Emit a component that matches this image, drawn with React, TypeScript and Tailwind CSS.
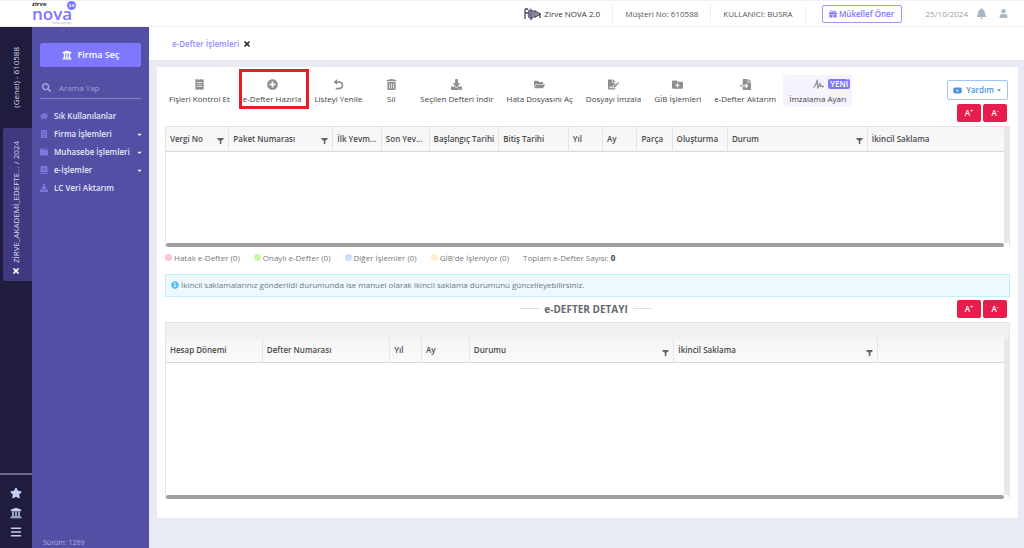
import React from 'react';
import {
  FaBell,
  FaBook,
  FaBuilding,
  FaCaretDown,
  FaDownload,
  FaFileImport,
  FaFileSignature,
  FaFolderOpen,
  FaFolderPlus,
  FaGift,
  FaHome,
  FaInfoCircle,
  FaPlusCircle,
  FaReceipt,
  FaSearch,
  FaStar,
  FaTrashAlt,
  FaUniversity,
  FaUser,
  FaWallet,
  FaYoutube,
} from 'react-icons/fa';
import { FaBars, FaXmark } from 'react-icons/fa6';

interface Column {
  label: string;
  width?: string;
  filter?: boolean;
}

const UndoIcon = ({ className }: { className?: string }) => (
  <svg viewBox="0 0 12 12" className={className}>
    <path d="M2.5 3.4h4.3a3.5 3.5 0 0 1 0 7.1H3" fill="none" stroke="currentColor" strokeWidth="1.7" />
    <path d="M4.6 0v6.6L.6 3.3z" fill="currentColor" />
  </svg>
);

const PulseIcon = ({ className }: { className?: string }) => (
  <svg viewBox="0 0 12 12" className={className}>
    <path
      d="M.5 9.5L2.8 6.5L4.6 1.2L5.2 10L7.4 4.6L8.4 8.2L9.4 7.2L10.2 8.4H12"
      fill="none"
      stroke="currentColor"
      strokeWidth="1.3"
      strokeLinejoin="round"
    />
  </svg>
);

const packageColumns: Column[] = [
  { label: 'Vergi No', width: 'w-[7.5%]', filter: true },
  { label: 'Paket Numarası', width: 'w-[12.4%]', filter: true },
  { label: 'İlk Yevm...', width: 'w-[5.8%]' },
  { label: 'Son Yev...', width: 'w-[5.7%]' },
  { label: 'Başlangıç Tarihi', width: 'w-[8.3%]' },
  { label: 'Bitiş Tarihi', width: 'w-[8.3%]' },
  { label: 'Yıl', width: 'w-[4.1%]' },
  { label: 'Ay', width: 'w-[4.1%]' },
  { label: 'Parça', width: 'w-[4.2%]' },
  { label: 'Oluşturma', width: 'w-[6.6%]' },
  { label: 'Durum', width: 'w-[16.7%]', filter: true },
  { label: 'İkincil Saklama' },
];

const detailColumns: Column[] = [
  { label: 'Hesap Dönemi', width: 'w-[11.5%]' },
  { label: 'Defter Numarası', width: 'w-[15.2%]' },
  { label: 'Yıl', width: 'w-[3.8%]' },
  { label: 'Ay', width: 'w-[5.7%]' },
  { label: 'Durumu', width: 'w-[24.4%]', filter: true },
  { label: 'İkincil Saklama', width: 'w-[24.3%]', filter: true },
  { label: '' },
];

const tools = [
  { label: 'Fişleri Kontrol Et', Icon: FaReceipt },
  { label: 'e-Defter Hazırla', Icon: FaPlusCircle, marked: true },
  { label: 'Listeyi Yenile', Icon: UndoIcon },
  { label: 'Sil', Icon: FaTrashAlt },
  { label: 'Seçilen Defteri İndir', Icon: FaDownload },
  { label: 'Hata Dosyasını Aç', Icon: FaFolderOpen },
  { label: 'Dosyayı İmzala', Icon: FaFileSignature },
  { label: 'GİB İşlemleri', Icon: FaFolderPlus },
  { label: 'e-Defter Aktarım', Icon: FaFileImport },
  { label: 'İmzalama Ayarı', Icon: PulseIcon, isNew: true },
];

const menu = [
  { label: 'Sık Kullanılanlar', Icon: FaHome },
  { label: 'Firma İşlemleri', Icon: FaBuilding, sub: true },
  { label: 'Muhasebe İşlemleri', Icon: FaWallet, sub: true },
  { label: 'e-İşlemler', Icon: FaBook, sub: true },
  { label: 'LC Veri Aktarım', Icon: FaDownload },
];

const legend = [
  { label: 'Hatalı e-Defter (0)', color: 'bg-[#ffc4d2]' },
  { label: 'Onaylı e-Defter (0)', color: 'bg-[#c3f7ae]' },
  { label: 'Diğer İşlemler (0)', color: 'bg-[#cde0fa]' },
  { label: "GİB'de İşleniyor (0)", color: 'bg-[#ffeecb]' },
];

const FilterIcon = () => (
  <svg viewBox="0 0 8 8" className="mt-1 h-[7px] w-[7px] shrink-0 fill-[#6a6262]">
    <path d="M.5 1h7v1.5L5 4.2V8H3.2V4.2L.5 2.5z" />
  </svg>
);

const FontButtons = () => (
  <div className="flex gap-0.5 text-[8px] font-semibold leading-none text-white">
    <button className="h-[18px] w-6 rounded-xs bg-[#e71d4b]" aria-label="Yazıyı büyüt">
      A<sup>+</sup>
    </button>
    <button className="h-[18px] w-6 rounded-xs bg-[#e71d4b]" aria-label="Yazıyı küçült">
      A<sup>-</sup>
    </button>
  </div>
);

const DataGrid: React.FC<{ columns: Column[]; bodyClass: string; band?: boolean }> = ({ columns, bodyClass, band }) => (
  <div className="border border-b-0 border-[#e4e4e4]">
    {band && <div className="h-4 bg-[#f1f1f1]" />}
    <div className="flex">
      <div className="min-w-0 flex-1">
        <table className="w-full table-fixed border-collapse text-left text-[8px] text-[#4a4a4a]">
          <thead>
            <tr className="h-6 border-b border-[#d9d9d9] bg-linear-to-b from-[#f5f5f5] to-[#fafafa]">
              {columns.map((col, i) => (
                <th
                  key={i}
                  className={`${col.width ?? ''} ${i < columns.length - 1 ? 'border-r border-[#e4e4e4]' : ''} p-0 font-semibold`}
                >
                  <div className="flex items-center justify-between pl-1 pr-1">
                    <span className="whitespace-nowrap">{col.label}</span>
                    {col.filter && <FilterIcon />}
                  </div>
                </th>
              ))}
            </tr>
          </thead>
        </table>
        <div className={bodyClass} />
        <div className="h-1 rounded-full bg-[#a0a0a0]" />
      </div>
      <div className="mb-1 w-[5px] bg-[#e8e8e8]" />
    </div>
  </div>
);

const TopBar = () => (
  <header className="flex h-[27px] items-center border-y border-[#f0f0f2] bg-white text-[8px] text-[#555]">
    <div className="relative ml-8 flex h-full w-12 flex-col">
      <span className="text-[6px] font-bold leading-[6px] text-[#222]">zirve</span>
      <span className="text-[17px] font-semibold leading-[13px] text-[#7e75fb]">nova</span>
      <span className="pl-5 text-[4px] leading-[6px] text-[#a9a3fd]">mikrogrup</span>
      <span className="absolute right-1 top-0 flex h-[9px] w-[9px] items-center justify-center rounded-full bg-[#7e75fb] text-[4px] font-bold leading-[4px] text-white">
        2.0
      </span>
    </div>
    <div className="ml-auto flex h-[18px] items-center">
      <div className="flex h-full items-center gap-0.5 border-r border-[#eeeeee] pr-3 text-[#333]">
        <svg viewBox="0 0 18 14" className="h-3.5 w-[18px]">
          <path d="M5 0l8 6-6 8-4-6z" fill="#d9cff5" />
          <path d="M1 2v10M1 2h3M1 6h4v5M5 3v8M7 3l3 2v4l-3 3zM11 4l5 3-5 3zM16 6v5" fill="none" stroke="#4b4358" strokeWidth="1.3" />
          <path d="M8 4l7 3-7 4z" fill="#8d8796" />
        </svg>
        Zirve NOVA 2.0
      </div>
      <div className="flex h-full items-center border-r border-[#eeeeee] px-3">Müşteri No: 610588</div>
      <div className="flex h-full items-center border-r border-[#eeeeee] px-3">KULLANICI: BUSRA</div>
      <button className="ml-4 flex h-[18px] w-20 items-center justify-center gap-0.5 rounded-xs border border-[#9d97fd] font-semibold text-[#7e75fb]">
        <FaGift className="h-2 w-2" />
        Mükellef Öner
      </button>
      <span className="ml-6 text-[#9b9b9b]">25/10/2024</span>
      <button className="ml-2" aria-label="Bildirimler">
        <FaBell className="h-[11px] w-[11px] text-[#a9b8c6]" />
      </button>
      <button className="ml-3 mr-4" aria-label="Hesap">
        <FaUser className="h-[9px] w-[9px] text-[#a9b8c6]" />
      </button>
    </div>
  </header>
);

const Rail = () => (
  <aside className="flex w-8 shrink-0 flex-col bg-[#1f1c3d] text-[8px] text-[#d8d8ea]">
    <div className="flex h-[101px] items-center justify-center">
      <span className="rotate-180 whitespace-nowrap [writing-mode:vertical-rl]">(Genel) - 610588</span>
    </div>
    <div className="ml-[3px] flex h-[153px] flex-col items-center justify-end gap-1 rounded-l-xs bg-[#3f3a80] pb-1.5 pr-1">
      <span className="rotate-180 whitespace-nowrap [writing-mode:vertical-rl]">ZİRVE_AKADEMİ_EDEFTE... / 2024</span>
      <button aria-label="Sekmeyi kapat">
        <FaXmark className="h-2 w-2 stroke-white stroke-[60] text-white" />
      </button>
    </div>
    <div className="mt-auto flex h-[75px] flex-col items-center justify-between border-t-2 border-[#6a6884] pb-2.5 pt-3 text-[#c3cdf7]">
      <FaStar className="h-3 w-3" />
      <FaUniversity className="h-3 w-3" />
      <FaBars className="h-3 w-3" />
    </div>
  </aside>
);

const Sidebar = () => (
  <nav className="flex w-[117px] shrink-0 flex-col bg-[#524fa5] text-[8px] text-[#e6e6f6]">
    <button className="mx-2 mt-4 flex h-6 items-center justify-center gap-1.5 rounded-xs bg-[#7f78ff] text-[9px] font-semibold text-white">
      <FaUniversity className="h-2.5 w-2.5" />
      Firma Seç
    </button>
    <label className="mx-2 mt-2.5 flex h-[22px] items-center gap-2 border-b border-[#8480c8] pl-0.5">
      <FaSearch className="h-[9px] w-[9px] shrink-0 text-[#a9a6dd]" />
      <input
        type="text"
        aria-label="Arama Yap"
        placeholder="Arama Yap"
        className="w-full bg-transparent text-[8px] outline-none placeholder:text-[#a19fd8]"
      />
    </label>
    <ul className="mt-2">
      {menu.map(({ label, Icon, sub }) => (
        <li key={label}>
          <a href="#" className="flex h-[18px] items-center gap-1.5 pl-2 pr-1.5 font-semibold">
            <Icon className="h-2 w-2 shrink-0 text-[#7f7adf]" />
            <span className="whitespace-nowrap">{label}</span>
            {sub && <FaCaretDown className="ml-auto h-[7px] w-[7px] text-white" />}
          </a>
        </li>
      ))}
    </ul>
    <span className="mb-px ml-[11px] mt-auto text-[7px] leading-[9px] text-[#b2b0e0]">Sürüm: 1269</span>
  </nav>
);

const Toolbar = () => (
  <div className="flex items-start">
    <div className="-ml-0.5 flex gap-px text-[8px] text-[#444]">
      {tools.map(({ label, Icon, marked, isNew }) => (
        <button
          key={label}
          className={`relative mt-2 flex h-8 min-w-11 flex-col items-center justify-center gap-[3px] rounded-xs px-1.5 leading-[11px] ${isNew ? 'bg-[#f6f3fc]' : ''}`}
        >
          <span className={`flex h-[11px] items-center gap-1 ${isNew ? '-mr-1 pl-6' : ''}`}>
            <Icon className="h-[11px] w-[11px] shrink-0 text-[#8f8f8f]" />
            {isNew && (
              <span className="rounded-xs bg-[#7f78ff] px-0.5 text-[8px] font-semibold leading-[10px] text-white">YENİ</span>
            )}
          </span>
          <span className="whitespace-nowrap">{label}</span>
          {marked && <span className="absolute -bottom-0.5 -right-0.5 -top-1.5 left-0.5 border-3 border-[#ed1c24]" />}
        </button>
      ))}
    </div>
    <div className="ml-auto mt-[13px] flex flex-col items-end gap-1">
      <button className="mr-0.5 flex h-5 w-[61px] items-center justify-center gap-1 rounded-xs border border-[#9cc6f5] text-[8px] font-semibold text-[#4b93e2]">
        <FaYoutube className="h-[9px] w-[9px]" />
        Yardım
        <FaCaretDown className="-ml-0.5 h-1.5 w-1.5" />
      </button>
      <div className="pr-[3px]">
        <FontButtons />
      </div>
    </div>
  </div>
);

export default function App() {
  return (
    <div className="flex min-h-screen flex-col bg-[#e8ebf3] font-['Open_Sans','Noto_Sans',sans-serif] leading-3">
      <TopBar />
      <div className="flex flex-1">
        <Rail />
        <Sidebar />
        <main className="min-w-0 flex-1">
          <div className="flex h-[33px] items-center gap-1 bg-white pl-[23px] text-[8px]">
            <a href="#" className="font-semibold text-[#958eff]">e-Defter İşlemleri</a>
            <button aria-label="Kapat">
              <FaXmark className="h-2 w-2 stroke-[#333] stroke-[60] text-[#333]" />
            </button>
          </div>

          <section className="ml-2 mr-1.5 mt-[7px] bg-white pb-[19px] pl-2 pr-2">
            <Toolbar />
            <div className="mt-1">
              <DataGrid columns={packageColumns} bodyClass="h-[91px]" />
            </div>

            <div className="mt-1 flex h-[14px] items-center text-[8px] text-[#777]">
              {legend.map((item) => (
                <span key={item.label} className="mr-3.5 flex items-center gap-0.5 whitespace-nowrap">
                  <span className={`h-[7px] w-[7px] rounded-full ${item.color}`} />
                  {item.label}
                </span>
              ))}
              <span>
                Toplam e-Defter Sayısı: <b className="text-[#444]">0</b>
              </span>
            </div>

            <div className="mt-[9px] flex h-[23px] items-center gap-0.5 border border-[#c3ecfc] bg-[#eef9fe] pl-[5px] text-[8px] text-[#6f7780]">
              <FaInfoCircle className="h-2 w-2 text-[#5bc0f5]" />
              İkincil saklamalarınız gönderildi durumunda ise manuel olarak ikincil saklama durumunu güncelleyebilirsiniz.
            </div>

            <div className="mt-[3px] grid grid-cols-[1fr_auto_1fr] items-center pr-[3px]">
              <h2 className="col-start-2 flex items-center gap-[5px] text-[10px] font-bold text-[#666870]">
                <span className="h-px w-[19px] bg-[#dddddd]" />
                e-DEFTER DETAYI
                <span className="h-px w-[19px] bg-[#dddddd]" />
              </h2>
              <div className="justify-self-end">
                <FontButtons />
              </div>
            </div>

            <div className="mt-1">
              <DataGrid columns={detailColumns} bodyClass="h-[132px]" band />
            </div>
          </section>
        </main>
      </div>
    </div>
  );
}
